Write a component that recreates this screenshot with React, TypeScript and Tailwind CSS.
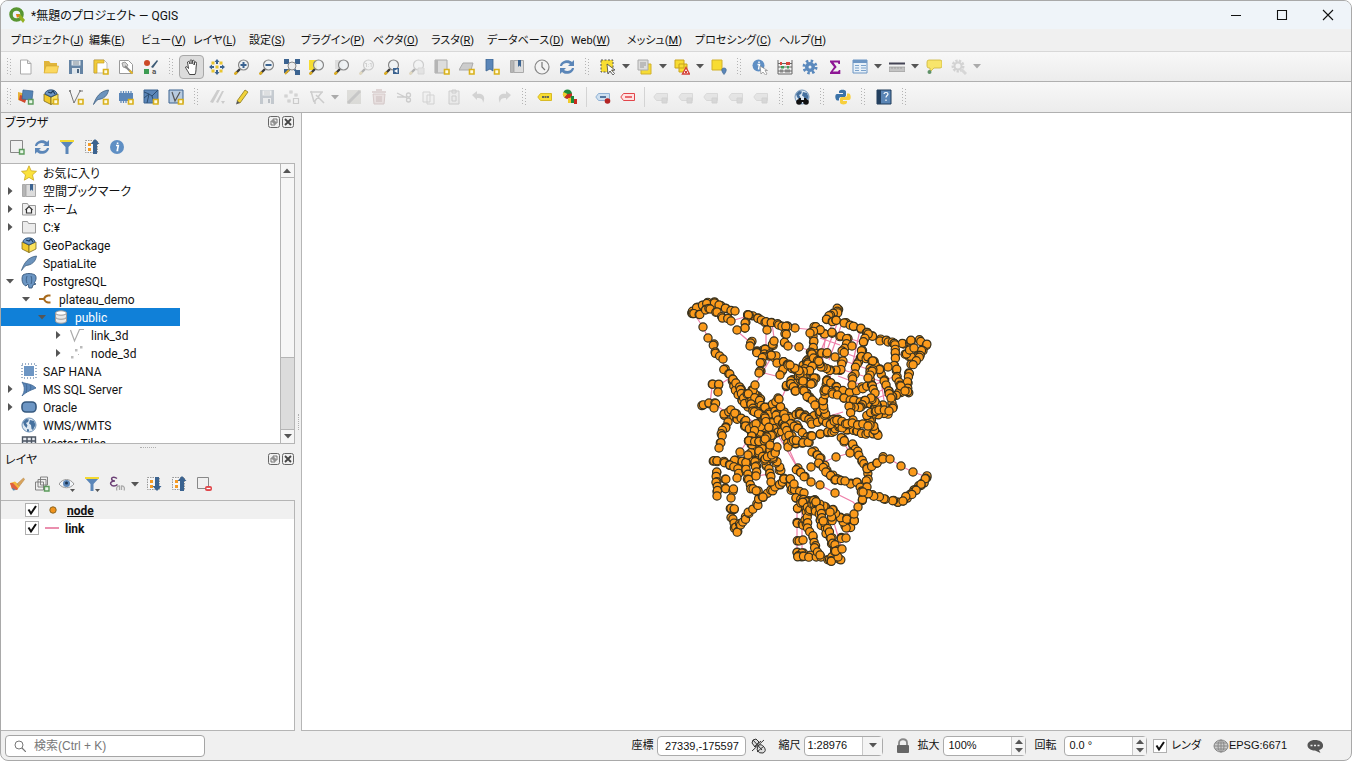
import { useState } from 'react';
import type { ReactNode } from 'react';

const BLUE = '#5b86b8';
const DARK = '#3b6390';

const plus = <path d="M10.500 10.500h4.500v4.500h-4.500z" fill="#fffbe0" stroke="#d9b11c" strokeWidth="1.600" />;
const greenPlus = <path d="M10.500 10.500h4.500v4.500h-4.500z" fill="#e9f6e9" stroke="#5b9a5b" strokeWidth="1.400" />;
const lens = (
  <g>
    <path d="M1 15l5-5" stroke="#3a3a3a" strokeWidth="2.400" />
    <path d="M.500 15.500l2.500-2.500" stroke="#e0b020" strokeWidth="2.400" />
    <circle cx="9.500" cy="6" r="5" fill="#eef2f5" fillOpacity=".85" stroke="#888" strokeWidth="1.200" />
  </g>
);
const globe = (
  <g>
    <circle cx="8" cy="8" r="7" fill="#dde8f2" stroke="#6f93b8" />
    <path d="M2 5l3-3 3 .5L7 5 5 6l1.500 2.500L5.500 11 3 8zM9 3l4 1 1.500 4-2.500 5-1.500-1-.5-4-2-1.500zM6 12l2 .5v2H6z" fill="#46719f" />
  </g>
);
const elephant = (
  <g>
    <path d="M2 2c3-2 9-2 12 0 2 2 1 6-1 8l2 1-3 1-1 3H8l-1-4-2 2C1 12 0 5 2 2z" fill="#6b95c2" stroke="#35577d" strokeWidth=".9" />
    <path d="M6 3c-1 3-1 5 0 7M10 3c1 3 1 5 0 8" fill="none" stroke="#35577d" strokeWidth=".8" />
  </g>
);
const refresh = (
  <g fill={BLUE}>
    <path d="M1 7c0-5 8-8 12-4l2-2v6H9l2-2C8 3 4 4 3 7z" />
    <path d="M15 9c0 5-8 8-12 4l-2 2V9h6l-2 2c3 2 7 1 8-2z" />
  </g>
);
const box = (
  <g>
    <path d="M1 5l7 3v7.500l-7-3.500z" fill="#f1c92b" stroke="#7d6b1c" strokeWidth=".8" />
    <path d="M15 5L8 8v7.500l7-3.500z" fill="#fbe35e" stroke="#7d6b1c" strokeWidth=".8" />
    <path d="M2 5c0-5 11-6 12 0L8 8z" fill="#6f98c6" stroke="#27486d" strokeWidth=".9" />
    <path d="M5 3l3 1 2-2 2 3" fill="none" stroke="#1e3c5c" strokeWidth="1.200" />
  </g>
);
const feather = <path d="M.500 15.500C3 8 7 2 15.500 1c-1 6-5 9-10.500 9.500-2 1.500-3 3-4.500 5z" fill="#6b93bd" stroke="#3f5f80" strokeWidth=".8" />;
const book = (
  <g>
    <path d="M1.500 1.500h3v12h-3z" fill="#b5b5b5" stroke="#aaa" />
    <path d="M5 1.500h9.500v12H5z" fill="#dcdcdc" stroke="#aaa" />
    <path d="M9 1h3v7l-1.500-1.500L9 8z" fill={DARK} />
  </g>
);
const info = (
  <g>
    <circle cx="8" cy="8" r="7" fill="#5f8fc4" />
    <path d="M7 6.500h2.300l-1 5h1M8.600 3.500v1.500" fill="none" stroke="#fff" strokeWidth="1.600" />
  </g>
);
const funnel = (
  <g>
    <path d="M1 2h14l-5.500 6v7h-3V8z" fill={BLUE} />
    <path d="M1 1h14v2H1z" fill="#f3d931" />
  </g>
);
const tree = (
  <g>
    <path d="M1.500 1.500h12v12h-12z" fill="#f6f6f6" stroke="#999" strokeDasharray="1.500 1" />
    <path d="M4 4h3v3H4zM4 9h3v3H4z" fill="#f59a23" />
  </g>
);
const tag = <path d="M3.500 4.500h11v7h-11L.8 8z" />;
const vec = (
  <g>
    <path d="M2 2l4 12L12 2h3" fill="none" stroke="#777" strokeWidth="1" />
    <path d="M1 1h2v2H1zM5 12h2v2H5zM11 1h2v2h-2z" fill="#888" />
  </g>
);

const ICONS: Record<string, ReactNode> = {
  file: <path d="M2.500 1h7L13 4.500V15H2.500zM9.500 1v3.500H13" fill="#fff" stroke="#aaa" />,
  folder: (
    <g>
      <path d="M1 2h5l1.500 2H14v10H1z" fill="#e0b53b" />
      <path d="M3 7h12.500L14 14H1z" fill="#fbd85f" stroke="#d2a42e" strokeWidth=".6" />
    </g>
  ),
  save: (
    <g>
      <path d="M1 1h14v14H1z" fill="#6584a4" />
      <path d="M3.500 1.500h9v5h-9z" fill="#dfe6ec" />
      <path d="M4 9h8v6H4z" fill="#dfe6ec" />
      <path d="M5 3h6M5 5h6" stroke="#87929b" />
      <path d="M9 10h2v4H9z" fill="#4c6681" />
    </g>
  ),
  layout: (
    <g>
      <path d="M1 1h10l3 3v10H1z" fill="#fff" stroke="#bbb" />
      <path d="M1 1h10v3H4v10H1z" fill="#f0cb3a" stroke="#c9a225" strokeWidth=".7" />
      {plus}
    </g>
  ),
  layouts: (
    <g>
      <path d="M1.500 1.500h9l4 4v9h-13z" fill="#fff" stroke="#999" />
      <path d="M4 4l3-1 3 3-2 3-3-1z" fill="#d5d5d5" stroke="#888" strokeWidth=".8" />
      <path d="M7 7l7 7" stroke="#888" strokeWidth="2" />
      <path d="M11.500 11.500l3 3" stroke="#e2b52b" strokeWidth="2" />
    </g>
  ),
  style: (
    <g>
      <circle cx="4" cy="4" r="3" fill="#cc4a28" />
      <path d="M1 10h5v5H1z" fill="#3d9c53" />
      <path d="M8 8l6-7 1 1-5 7z" fill="#3c5a75" />
      <text x="9" y="15" fontSize="8" fontWeight="bold" fill="#555">a</text>
    </g>
  ),
  hand: <path d="M5.500 15.500C4 12 2 10 1.500 8c1-1 2 0 3 1.500L3.500 3c1-1 2-.5 2.500 2V1.500c1-1 2-.5 2 .5v3l.5-3.500c1-.6 2 0 1.800 1L10 6l1-3c1-.4 1.700.3 1.500 1.500L12 9c0 2 0 4-1 6.500z" fill="#fff" stroke="#333" strokeWidth=".9" />,
  panSel: (
    <g fill={DARK}>
      <path d="M8 0l2.500 3H9v2H7V3H5.500zM8 16l2.500-3H9v-2H7v2H5.500zM0 8l3-2.500V7h2v2H3v1.500zM16 8l-3-2.500V7h-2v2h2v1.500z" />
      <path d="M2.500 2.500h3v3h-3zM10.500 2.500h3v3h-3zM2.500 10.500h3v3h-3zM10.500 10.500h3v3h-3zM6.500 6.500h3v3h-3z" fill="#e9c52f" />
    </g>
  ),
  zoomIn: <g>{lens}<path d="M9.500 3v6M6.500 6h6" stroke={DARK} strokeWidth="2" /></g>,
  zoomOut: <g>{lens}<path d="M6.500 6h6" stroke={DARK} strokeWidth="2" /></g>,
  zoomFull: (
    <g>
      <path d="M0 0h5v5H0zM11 0h5v5h-5zM11 11h5v5h-5zM0 10h4v4H0z" fill={DARK} />
      <path d="M4 4l8 8M12 4l-8 8" stroke={DARK} strokeWidth="2" />
      <circle cx="8" cy="7" r="4" fill="#eee" stroke="#888" />
      <path d="M1 15l4-4" stroke="#d7a92a" strokeWidth="2" />
    </g>
  ),
  zoomSel: <g><path d="M0 1h8v10H0z" fill="#f6dd31" />{lens}</g>,
  zoomLayer: <g><path d="M1 1h8v9H1z" fill="#ddd" />{lens}</g>,
  zoomNative: <g>{lens}<text x="5.500" y="8" fontSize="6" fill="#555">1:1</text></g>,
  zoomLast: <g>{lens}<path d="M9 9h6v6H9z" fill={DARK} /><path d="M13.500 10v4l-3.500-2z" fill="#fff" /></g>,
  zoomNext: <g>{lens}<path d="M9 9h6v6H9z" fill="#ccc" stroke="#aaa" /></g>,
  newMap: <g><path d="M1 1h12v13H1z" fill="#ddd" stroke="#aaa" /><path d="M1 1h3v13H1z" fill="#b5b5b5" />{plus}</g>,
  new3d: <g><path d="M4 4h10l-2 7H0z" fill="#ccc" stroke="#aaa" />{plus}</g>,
  bookmarkAdd: <g><path d="M2 0h7v12l-3-2-4 2z" fill={BLUE} stroke={DARK} strokeWidth=".8" />{plus}</g>,
  book,
  clock: (
    <g>
      <circle cx="8" cy="8" r="7" fill="#f3f3f3" stroke="#888" strokeWidth="1.200" />
      <path d="M8 3v5l3 3" fill="none" stroke="#777" strokeWidth="1.200" />
    </g>
  ),
  refresh,
  select: (
    <g>
      <path d="M1 1h12v12H1z" fill="#f8dd32" stroke="#555" strokeDasharray="2 1.500" />
      <path d="M7 5l1 10 2-3 3 4 1.500-1.500-3-3.500h3.500z" fill="#fff" stroke="#444" strokeWidth=".8" />
    </g>
  ),
  selectForm: (
    <g>
      <path d="M4 5h10v10H4z" fill="#f6dc37" stroke="#d2b12a" />
      <path d="M1 1h10v10H1z" fill="#ddd" stroke="#aaa" />
      <path d="M3 4h6M3 6h6M3 8h4" stroke="#999" />
    </g>
  ),
  deselect: (
    <g>
      <path d="M1 1h9v8H1zM5 5h8v8H5z" fill="#f8dc32" stroke="#c8a31f" />
      <path d="M12 8.500l3.500 6.500h-7z" fill="#fff" stroke="#d4403a" strokeWidth="1.400" />
      <path d="M11 13h2" stroke="#d4403a" strokeWidth="2" />
    </g>
  ),
  selectLoc: (
    <g>
      <path d="M1 1h10v10H1z" fill="#f8dc32" stroke="#d2b12a" />
      <path d="M13 9c3 0 3 3 0 6.500-3-3.500-3-6.500 0-6.500z" fill={BLUE} stroke={DARK} strokeWidth=".6" />
    </g>
  ),
  identify: (
    <g>
      <circle cx="6.500" cy="6.500" r="6" fill="#5f8fc4" />
      <path d="M5.500 5.500h2l-1 5M7 2.500v1.500" fill="none" stroke="#fff" strokeWidth="1.500" />
      <path d="M8 7l1 8 2-2 2.500 3 1.500-1-2-3.500h2.500z" fill="#fff" stroke="#888" strokeWidth=".7" />
    </g>
  ),
  abacus: (
    <g>
      <path d="M1 1v14M15 1v14M1 4.500h14M1 8h14M1 12h14M1 15h14" stroke="#666" strokeWidth="1" />
      <path d="M3 3h2v3H3zM9 3h4v3H9z" fill="#d8463c" />
      <path d="M4 7h3v2.500H4zM10 7h2v2.500h-2z" fill="#3f9b57" />
      <path d="M3 10.500h3v3H3zM8 10.500h5v3H8z" fill="#888" />
    </g>
  ),
  gear: (
    <g>
      <circle cx="8" cy="8" r="6" fill="none" stroke="#5a89bd" strokeWidth="3" strokeDasharray="2.400 2.300" />
      <circle cx="8" cy="8" r="5" fill="#5a89bd" />
      <circle cx="8" cy="8" r="1.500" fill="#eaf0f6" />
    </g>
  ),
  sigma: <path d="M3 1.500h10v3.500h-1.500l-.7-1.500H6.500L9.700 8l-4 4.500h5.300l1-1.500h1.300v4H3v-1.500L7 8 3 3z" fill="#8e1795" />,
  table: (
    <g>
      <path d="M1 1h14v13H1z" fill="#e7f0f8" stroke="#6d96c4" />
      <path d="M1 1h14v3H1z" fill="#6d96c4" />
      <path d="M3 6.500h4M9 6.500h5M3 9h4M9 9h5M3 11.500h4M9 11.500h5" stroke="#7ba2cb" strokeWidth="1" />
    </g>
  ),
  measure: (
    <g>
      <path d="M0 4.500h16" stroke="#445" strokeWidth="2" />
      <path d="M0 8h16v4.500H0z" fill="#c4c4c4" stroke="#999" strokeWidth=".7" />
      <path d="M3 8v2M6 8v2M9 8v2M12 8v2" stroke="#999" strokeWidth=".8" />
    </g>
  ),
  tip: (
    <g>
      <path d="M3 1h11q2 0 2 2v4q0 2-2 2H8l-4 4V9H3Q1 9 1 7V3q0-2 2-2z" fill="#f8e56b" stroke="#cbb538" strokeWidth=".8" />
      <circle cx="3.500" cy="13" r="2" fill="#5f9168" />
    </g>
  ),
  gearOff: (
    <g>
      <circle cx="7" cy="7" r="5" fill="none" stroke="#999" strokeWidth="3" strokeDasharray="2.200 1.200" />
      <circle cx="7" cy="7" r="3.500" fill="none" stroke="#999" strokeWidth="2" />
      <path d="M10 10l5 5" stroke="#aaa" strokeWidth="3" />
    </g>
  ),
  dataSource: (
    <g>
      <path d="M0 3l8 2-1 8-7-2z" fill="#e8b23a" />
      <path d="M2 6l7 2-2 6-6-3z" fill="#d2482f" />
      <path d="M5 1l10 1-1 9-10-1z" fill="#5484b5" stroke={DARK} strokeWidth=".7" />
      {greenPlus}
    </g>
  ),
  gpkgAdd: <g>{box}{plus}</g>,
  vecAdd: <g>{vec}{plus}</g>,
  featherAdd: <g>{feather}{plus}</g>,
  chipAdd: (
    <g>
      <path d="M1 4h14v8H1z" fill={BLUE} />
      <path d="M3 2v2M5.500 2v2M8 2v2M10.500 2v2M13 2v2M3 12v2M5.500 12v2M8 12v2" stroke={BLUE} strokeWidth="1.200" />
      {plus}
    </g>
  ),
  meshAdd: (
    <g>
      <path d="M1 1h14v13H1z" fill="#5b86b8" stroke={DARK} />
      <path d="M1 9l5-4 3 2 6-6M6 5l-2 9M9 7l2 7M1 3l5 2" fill="none" stroke="#2c4d70" />
      {plus}
    </g>
  ),
  virtualAdd: (
    <g>
      <path d="M1 1h14v13H1z" fill="#b8cbdf" stroke={DARK} />
      <path d="M4 3l3 9 5-9" fill="none" stroke="#555" strokeWidth="1.200" />
      {plus}
    </g>
  ),
  edits: <path d="M1 13L8 1h3L4 14zM7 13l6-11h2L9 14zM12 12h4l-2 3z" fill="#888" />,
  pencil: (
    <g>
      <path d="M3 12l8-11 3 2-8 11z" fill="#f2d339" stroke="#8c7a20" strokeWidth=".8" />
      <path d="M3 12l-1 3.500L6 14z" fill="#555" />
    </g>
  ),
  points: <path d="M1 6h2v2H1zM6 2h2v2H6zM11 5h2v2h-2zM4 11h2v2H4zM9.500 9.500h5v5h-5z" fill="none" stroke="#888" strokeWidth="1.200" />,
  vertex: <path d="M1 3h13M2 2l3 11M13 3L5 13M7 6l8 8M4 12h2v3" fill="none" stroke="#888" strokeWidth="1.500" />,
  form: <g><path d="M1 1h14v14H1z" fill="#b8b5a4" /><path d="M2 14L14 2" stroke="#777" strokeWidth="3" /></g>,
  trash: <g><path d="M2 5h12l-1 10H3z" fill="#e8bcbc" stroke="#b77" /><path d="M1 3h14M5 1h6M6 7v6M8 7v6M10 7v6" stroke="#b77" strokeWidth="1.500" /></g>,
  cut: <g fill="none" stroke="#888" strokeWidth="1.300"><path d="M1 4l10 5M1 8h10" /><circle cx="12.500" cy="6" r="2" /><circle cx="12.500" cy="11" r="2" /></g>,
  copy: <path d="M2 3h7v10H2zM6 6h7v9H6z" fill="#eee" stroke="#999" />,
  paste: <path d="M3 2h10v13H3zM6 1h4v3H6zM6 7h4v5H6z" fill="#ddd" stroke="#888" />,
  undo: <path d="M1 6l5-4v3c6-1 9 3 6 9 0-4-2-5-6-5v2z" fill="#999" />,
  redo: <path d="M15 6l-5-4v3C4 4 1 8 4 14c0-4 2-5 6-5v2z" fill="#999" />,
  label: <g fill="#f8dd32" stroke="#d8ba26">{tag}<path d="M5 8h7" stroke="#665" strokeWidth="2" strokeDasharray="2 .5" /></g>,
  diagram: (
    <g>
      <circle cx="5.500" cy="5" r="4.500" fill="#1d8b3c" />
      <path d="M5.500 5L1.500 3a4.500 4.500 0 001 5.500z" fill="#f1cb2c" />
      <path d="M5.500 5L10 4.500a4.500 4.500 0 01-7.500 4z" fill="#c92c20" />
      <path d="M6 9h3v5H6z" fill="#f1cb2c" />
      <path d="M9 7h3v7H9z" fill="#1d8b3c" />
      <path d="M12 10h3v5h-3z" fill="#c92c20" />
    </g>
  ),
  labelPin: (
    <g>
      <g fill="#cfe0f0" stroke="#8fb0d4">{tag}</g>
      <path d="M5 8h6" stroke="#5577a0" strokeWidth="2" />
      <circle cx="12.500" cy="12" r="2.800" fill="#b32424" />
    </g>
  ),
  labelRed: <g fill="#ffe3e3" stroke="#e2454a">{tag}<path d="M5 8h7" strokeWidth="1.500" /></g>,
  labelOff: (
    <g>
      <g fill="#ccc" stroke="#aaa">{tag}</g>
      <path d="M9 9h5v5H9z" fill="#aaa" stroke="#999" />
    </g>
  ),
  metaSearch: (
    <g>
      {globe}
      <circle cx="5" cy="13" r="2.800" fill="#111" />
      <circle cx="12" cy="13" r="2.800" fill="#111" />
      <path d="M5 9h2v2h3V9h2l1 4H4z" fill="#111" />
    </g>
  ),
  python: (
    <g>
      <path d="M4 8V2.500C4 0 11 0 11 2.500V6c0 1.500-1 2-2 2H6c-1.500 0-2 1-2 2v1.500H2C0 11-.5 5 2 5h6V4H4z" fill="#3b73a8" />
      <path d="M12 8v5.500c0 2.500-7 2.500-7 0V10c0-1.500 1-2 2-2h3c1.500 0 2-1 2-2V4.500h2c2 .5 2.500 6.500 0 6.500H8v1h4z" fill="#f7cf3e" />
    </g>
  ),
  help: (
    <g>
      <path d="M1 1h14v14H1z" fill="#5a85b5" stroke="#1e3a58" />
      <path d="M1 1h4v14H1z" fill="#24405f" />
      <path d="M8 5c0-2 4-2 4 0 0 1.500-2 1.500-2 3.500M10 10.500v1.500" fill="none" stroke="#fff" strokeWidth="1.200" />
    </g>
  ),
  addSel: <g><path d="M1.500 1.500h12v12h-12z" fill="none" stroke="#888" />{greenPlus}</g>,
  funnel,
  collapse: <g>{tree}<path d="M11 0l4.500 5H13v10H9V5H6.500z" fill={DARK} /></g>,
  expand: <g>{tree}<path d="M11 15l4.500-5H13V1H9v9H6.500z" fill={DARK} /></g>,
  info,
  star: <path d="M8 .8l2.200 5 5.300.5-4 3.600 1.200 5.300L8 12.400l-4.700 2.800 1.200-5.300-4-3.600 5.300-.5z" fill="#fbe23c" stroke="#c9a722" strokeWidth=".8" />,
  home: (
    <g>
      <path d="M1.500 2.500h5l1 2h7v9.500h-13z" fill="#eee" stroke="#999" />
      <path d="M4.500 9L8 5.500 11.500 9M5.500 8.500V12h5V8.500" fill="#fff" stroke="#333" strokeWidth="1.200" />
    </g>
  ),
  dir: <path d="M1.500 2.500h5l1 2h7v9.500h-13z" fill="#ececec" stroke="#999" />,
  box,
  feather,
  elephant,
  plug: <path d="M2 8h5M13.500 4.500H11Q8 5 7 8q1 3 4 3.500h2.500" fill="none" stroke="#a86a1c" strokeWidth="2" />,
  db: (
    <g>
      <path d="M2.500 4v8c0 3 11 3 11 0V4z" fill="#e9e9e9" stroke="#999" />
      <ellipse cx="8" cy="4" rx="5.500" ry="2.200" fill="#fff" stroke="#999" />
      <path d="M2.500 8c0 3 11 3 11 0" fill="none" stroke="#999" />
    </g>
  ),
  vec: <path d="M1.500 3l4 11 5-11.500H15" fill="none" stroke="#aaa" strokeWidth="1.200" />,
  dots: <path d="M2 11h2.500v2.500H2zM6 4h2.500v2.500H6zM11 1h2.500v2.500H11zM9 9h1v1H9z" fill="#bbb" />,
  hana: <g><path d="M3 3h10v10H3z" fill="#6d96c4" /><path d="M1 1h14v14H1z" fill="none" stroke={DARK} strokeDasharray="1 2" /></g>,
  mssql: <g><path d="M1 1c3 2 9 1 14 6-4 2-9 3-14 8 3-5 3-9 0-14z" fill={BLUE} stroke={DARK} strokeWidth=".8" /><path d="M5 2.500c1 3 1 6 0 9M9 4c1 2 1 3 0 5" fill="none" stroke="#3b6390" strokeWidth=".8" /></g>,
  oracle: <rect x="1" y="3" width="14" height="10" rx="4" fill="#6d96c4" stroke="#36597f" strokeWidth="1.600" />,
  globe,
  grid: <path d="M1.500 2h13v12h-13zM1.500 6h13M1.500 10h13M6 2v12M10.500 2v12" fill="#e6eaf0" stroke="#4c5663" strokeWidth="1.400" />,
  brush: (
    <g>
      <path d="M1 7l5-1.500 5 4.500-3 4-5-1z" fill="#f4b53a" />
      <path d="M1 7l3 0 5 5.500-1 1.500-5-1z" fill="#e0603f" />
      <path d="M8 8l6.500-6 1 1.500L10.500 10z" fill="#d9a35b" stroke="#b98a48" strokeWidth=".6" />
      <path d="M3 11.500l4 2.500-3 .5z" fill="#58a" />
    </g>
  ),
  group: <g><path d="M1.500 6h8v8h-8zM4 3.500h8V11H4zM6.500 1h7v8h-7z" fill="none" stroke="#777" strokeWidth=".9" />{greenPlus}</g>,
  eye: (
    <g>
      <path d="M0 8c4-6 11-6 15 0-4 5-11 5-15 0z" fill="#f2f5f8" stroke="#999" strokeWidth="1" />
      <circle cx="7.500" cy="7.500" r="3.500" fill={BLUE} />
      <circle cx="7.500" cy="7" r="1.500" fill="#1d3450" />
      <path d="M11 13h5l-2.500 3z" fill="#555" />
    </g>
  ),
  funnelMenu: <g>{funnel}<path d="M11 13h5l-2.500 3z" fill="#555" /></g>,
  epsilon: (
    <g fill="none">
      <path d="M8 2.500C5 0 1.500 1.500 3 4c.6 1 2 1 3 1-4 0-5 2-4 3.500 1 2 4.500 2 6.500 0" stroke="#6b3f75" strokeWidth="1.500" />
      <path d="M8 14.500c-1-2 0-5 2.500-4.500v4M15 14.500c1-2 0-5-2.500-4.500v4" stroke="#aaa" strokeWidth="1.300" />
    </g>
  ),
  remove: (
    <g>
      <path d="M1.500 1.500h11v11h-11z" fill="none" stroke="#888" />
      <rect x="9" y="10" width="7" height="5" rx="2" fill="#e0464a" />
      <path d="M10.500 12.500h4" stroke="#fff" strokeWidth="1.200" />
    </g>
  ),
  mouse: (
    <g fill="none" stroke="#333" strokeWidth="1">
      <path d="M2 5q0-4 4-4l3 3-4 5zM8 8q3-3 6 1t-1 6q-4 1-6-3z" fill="#ddd" />
      <path d="M2 13L14 2M3 2l9 10M4 9l7-6M7 14l7-6" />
    </g>
  ),
  lock: (
    <g>
      <path d="M4 8V5c0-5 8-5 8 0v3" fill="none" stroke="#888" strokeWidth="1.800" />
      <rect x="2" y="7" width="12" height="8" rx="1" fill="#666" />
    </g>
  ),
  crs: (
    <g fill="none" stroke="#888" strokeWidth="1">
      <ellipse cx="8" cy="8" rx="7" ry="6" fill="#ccc" />
      <ellipse cx="8" cy="8" rx="3" ry="6" />
      <path d="M1 8h14M2 5h12M2 11h12M8 2v12" />
    </g>
  ),
  bubble: (
    <g>
      <path d="M8 2c10 0 10 9 4 10l1.500 3L8 12.500C-2 12.500-2 2 8 2z" fill="#555" />
      <path d="M3.500 7.500h2M7 7.500h2M10.500 7.500h2" stroke="#eee" strokeWidth="1.600" />
    </g>
  ),
};

function Icon({ name }: { name: string }) {
  return <svg viewBox="0 0 16 16" className="size-4 shrink-0">{ICONS[name]}</svg>;
}

type Item = { icon: string; off?: boolean; menu?: boolean; on?: boolean };

// "x" suffix = disabled, "v" suffix = has a drop-down, "*" = pressed
function parse(s: string): (Item | string)[] {
  return s.split(' ').map((w) => {
    if (w === '|' || w === '/') return w;
    const [icon, flags = ''] = w.split(':');
    return { icon, off: flags.includes('x'), menu: flags.includes('v'), on: flags.includes('*') };
  });
}

const ROW1 = parse('file folder save layout layouts style | hand:* panSel zoomIn zoomOut zoomFull zoomSel zoomLayer zoomNative:x zoomLast zoomNext:x newMap new3d bookmarkAdd book clock refresh | select:v selectForm:v deselect:v selectLoc | identify abacus gear sigma table:v measure:v tip gearOff:xv');
const ROW2 = parse('dataSource gpkgAdd vecAdd featherAdd chipAdd meshAdd virtualAdd | edits:x pencil save:x points:x vertex:xv form:x trash:x cut:x copy:x paste:x undo:x redo:x | label diagram / labelPin labelRed / labelOff:x labelOff:x labelOff:x labelOff:x labelOff:x | metaSearch | python | help |');
const BROWSER_TOOLS = parse('addSel refresh funnel collapse info');
const LAYER_TOOLS = parse('brush group eye funnelMenu epsilon:v expand collapse remove');

function Caret({ off = false }: { off?: boolean }) {
  return <svg viewBox="0 0 8 5" className="h-[5px] w-2 shrink-0"><path d="M0 0h8L4 4.500z" fill={off ? '#aaa' : '#555'} /></svg>;
}

function Grip() {
  return (
    <svg viewBox="0 0 4 18" className="h-[18px] w-1">
      <path d="M.5 0v18M3.500 1v18" stroke="#b4b4b4" strokeDasharray="1 2" />
    </svg>
  );
}

function Tools({ items }: { items: (Item | string)[] }) {
  return items.map((t, i) => {
    if (t === '|') return <span key={i} className="flex w-4 shrink-0 justify-center"><Grip /></span>;
    if (typeof t === 'string') return <span key={i} className="flex w-2 shrink-0 justify-center"><span className="h-5 w-px bg-[#d4d4d4]" /></span>;
    return (
      <button key={i} aria-label={t.icon} disabled={t.off} className="flex shrink-0 items-center">
        <span className={`flex h-6 w-[25px] items-center justify-center rounded-sm border ${t.on ? 'border-[#a8a8a8] bg-[#dcdcdc]' : 'border-transparent'} ${t.off ? 'opacity-35 saturate-50' : ''}`}><Icon name={t.icon} /></span>
        {t.menu && <span className="flex w-3 justify-center"><Caret off={t.off} /></span>}
      </button>
    );
  });
}

const MENUS = [
  ['プロジェクト', 'J', 'w-[78px]'],
  ['編集', 'E', 'w-[52px]'],
  ['ビュー', 'V', 'w-[52px]'],
  ['レイヤ', 'L', 'w-[56px]'],
  ['設定', 'S', 'w-[52px]'],
  ['プラグイン', 'P', 'w-[72px]'],
  ['ベクタ', 'O', 'w-[58px]'],
  ['ラスタ', 'R', 'w-[56px]'],
  ['データベース', 'D', 'w-[84px]'],
  ['Web', 'W', 'w-[56px]'],
  ['メッシュ', 'M', 'w-[68px]'],
  ['プロセシング', 'C', 'w-[84px]'],
  ['ヘルプ', 'H', 'w-[56px]'],
];

const TREE = [
  { text: 'お気に入り', icon: 'star', level: 'pl-0', arrow: '' },
  { text: '空間ブックマーク', icon: 'book', level: 'pl-0', arrow: 'r' },
  { text: 'ホーム', icon: 'home', level: 'pl-0', arrow: 'r' },
  { text: 'C:¥', icon: 'dir', level: 'pl-0', arrow: 'r' },
  { text: 'GeoPackage', icon: 'box', level: 'pl-0', arrow: '' },
  { text: 'SpatiaLite', icon: 'feather', level: 'pl-0', arrow: '' },
  { text: 'PostgreSQL', icon: 'elephant', level: 'pl-0', arrow: 'd' },
  { text: 'plateau_demo', icon: 'plug', level: 'pl-4', arrow: 'd' },
  { text: 'public', icon: 'db', level: 'pl-8', arrow: 'd' },
  { text: 'link_3d', icon: 'vec', level: 'pl-12', arrow: 'r' },
  { text: 'node_3d', icon: 'dots', level: 'pl-12', arrow: 'r' },
  { text: 'SAP HANA', icon: 'hana', level: 'pl-0', arrow: '' },
  { text: 'MS SQL Server', icon: 'mssql', level: 'pl-0', arrow: 'r' },
  { text: 'Oracle', icon: 'oracle', level: 'pl-0', arrow: 'r' },
  { text: 'WMS/WMTS', icon: 'globe', level: 'pl-0', arrow: '' },
  { text: 'Vector Tiles', icon: 'grid', level: 'pl-0', arrow: '' },
];

// road chains in map coordinates, nodes are spread along them
const ROADS = [
  '693,312 697,307 702,305 707,303 714,303 720,305 725,308 735,311',
  '693,314 700,315 705,309 710,309 716,313 722,317 728,319 731,321',
  '748,315 757,318 765,322 771,323 778,324 788,327 795,328',
  '748,316 746,322 744,327 737,330',
  '787,327 786,335 784,343 788,346',
  '751,342 750,346',
  '758,351 766,348 773,345 774,341',
  '758,352 770,355 775,357 777,363',
  '770,354 763,357 761,363 760,371 759,373',
  '783,362 788,365 782,370 780,375',
  '788,365 795,370 798,370 807,361 815,362',
  '787,386 792,380 795,383 803,378 805,387 808,397',
  '798,370 799,376 805,373 815,377 813,383',
  '714,345 716,353 723,359',
  '724,370 730,375 733,380 735,390 742,400 748,407',
  '732,378 740,388 747,395 757,397 752,390 755,385',
  '740,390 745,403 753,400 760,407 761,417',
  '748,395 760,400 760,411 773,405 778,398',
  '750,405 755,412 761,417 775,415 783,413 790,417 800,413 805,415',
  '765,408 770,414 780,407 779,399',
  '712,383 718,385 718,392', '703,405 709,404 716,404 714,408',
  '725,415 730,411 734,415 736,420 728,422',
  '736,414 745,421 748,427 755,428 762,421 768,423 777,427',
  '725,427 722,435 720,442 719,448',
  '714,461 717,461 724,462 730,465 735,460 742,462 747,463 757,459',
  '717,473 717,482 718,491 717,496', '726,480 725,488 733,490 731,498',
  '730,508 733,510 732,518 735,528 737,531 740,525 745,518 748,513 757,505 758,498 763,497 772,490 780,485 787,480',
  '730,465 738,468 737,478', '747,463 747,470 748,480 752,488 757,492 763,497',
  '756,448 756,456 756,467 756,476', '767,455 767,465 770,473 771,482',
  '780,471 777,463 773,458 775,450 768,453 762,448 756,452 748,455',
  '748,427 752,433 748,440 752,445 755,440 762,448',
  '745,425 760,433 767,435 765,428 755,425 750,440 760,442 770,440 770,450',
  '765,420 772,424 777,432 788,432 787,438 788,447',
  '760,452 764,460 776,453 777,447', '776,415 782,423 789,428 797,425',
  '783,414 790,423 799,428 808,437 805,442 795,443 792,436',
  '784,427 793,441 802,442 808,442 812,436 820,434 827,433 833,432 840,427 848,429 857,432 867,434 877,435 875,430 873,425 868,417',
  '800,415 810,418 820,415 833,420 843,427 853,422',
  '805,417 812,423 822,420 830,424 838,420',
  '842,438 845,441 852,445 858,452 862,460 868,468 867,480 865,492 862,500 858,507',
  '853,520 851,527 845,527 840,517 832,509 825,506 815,500',
  '815,451 812,452', '817,456 821,459 824,466 832,475 840,480', '850,484 856,483 862,492 867,487',
  '819,463 826,472 836,480 845,481',
  '797,469 801,472 805,477 811,482',
  '868,468 877,463 883,458 890,459',
  '927,477 923,483 915,490 907,497 898,503 893,500 885,498 873,495 863,492',
  '925,479 920,485 911,494 903,501',
  '787,480 792,490 795,490 804,493', '783,479 790,478 794,484',
  '797,497 805,503 797,508 803,500 815,500', '797,523 802,524 805,520', '798,540 803,540',
  '798,553 803,552 803,557 798,557 810,556 821,557', '807,502 807,512 807,523 812,537 815,547 820,555',
  '804,503 810,510 812,504', '813,501 816,510 820,520 827,533 832,543 835,550 837,557',
  '817,503 824,522 831,538 838,550', '829,560 833,556 840,560 832,562 838,557', '835,551 842,549', '842,538 846,538',
  '848,519 854,521 854,514', '833,520 830,512',
  '838,309 838,312 830,315 827,320 832,321 837,321 845,322 853,326 860,329 867,333 873,337 880,340 887,341 895,344 903,344 910,343 912,340 920,341 927,345 922,350 918,355 910,356 906,353 914,348',
  '919,356 912,365 910,373 908,383 908,392 900,393 892,397 893,407 888,413 878,414 868,416 870,425',
  '895,344 895,353 895,365 888,367', '896,370 897,377 900,385 905,391',
  '815,328 825,333 833,333 840,336 847,338 843,352 842,360 840,370 830,370 822,367 815,362 807,363',
  '815,328 813,332 813,342 811,352 822,353 828,353 835,357', '819,329 810,333',
  '807,363 805,373 802,387 810,398 817,407 825,415 823,400 825,390 827,380',
  '811,355 818,362 809,370 799,372 790,365',
  '827,380 837,387 837,390 850,392 862,388 872,385',
  '825,390 832,393 843,398 855,400 865,403 875,407 883,405',
  '867,333 863,342 862,350 858,363 853,378 852,385',
  '862,356 867,358 873,362 880,370 885,380 888,390 891,398',
  '872,362 870,373 872,385 875,393', '880,370 872,370 868,378',
  '877,405 871,399 864,400 860,408 850,407 853,420', '868,416 875,411 889,411',
  '838,420 846,424 858,424 868,426', '790,383 796,392 804,390 810,385 803,381',
  '808,397 815,405',
  '754,412 765,417 768,428 772,435 764,440 770,445',
];

const SINGLES = '703,327 708,338 767,330 799,347 852,346 740,452 811,467 836,457 850,453 820,485 835,493 901,466 913,472';

const LINKS = [
  '731,321 748,316', '737,331 751,343', '766,323 766,348', '772,323 775,345', '795,328 815,330', '785,344 799,347 811,351',
  '695,315 703,327 708,338 714,345', '723,359 724,370', '712,387 710,404', '719,385 730,378', '716,405 728,414',
  '736,412 760,425', '736,415 755,428 770,440', '775,430 797,467', '788,447 798,469', '811,467 836,457 850,453 842,440', '811,482 820,485 835,493 853,502 858,507',
  '890,459 901,466 913,472 927,477', '740,452 748,440', '756,476 770,474', '797,500 797,553', '802,505 802,553', '856,507 850,527 846,538',
  '833,520 842,549', '760,372 780,377', '787,386 780,402', '833,322 819,355', '837,324 824,358', '841,326 829,360', '820,338 840,345',
  '847,338 861,342', '843,352 863,360', '842,360 873,371', '840,369 880,381', '838,376 870,388', '860,330 848,385', '850,395 893,377',
  '875,393 890,387', '877,398 891,393', '843,412 826,417', '895,355 908,354', '880,375 884,400', '829,370 832,385', '825,340 822,365',
  '755,385 771,358',
];

function pts(s: string) {
  return s.split(' ').map((p) => p.split(',').map(Number));
}

// small fixed-seed generator so the nodes stay put between renders
let seed = 7;
function rand() {
  seed = (seed * 16807) % 2147483647;
  return seed / 2147483647;
}

const NODES: number[][] = [];
for (const road of ROADS) {
  const p = pts(road);
  for (let i = 0; i < p.length - 1; i++) {
    const [x1, y1] = p[i];
    const [x2, y2] = p[i + 1];
    const n = Math.max(1, Math.round(Math.hypot(x2 - x1, y2 - y1) / 5.5));
    for (let k = 0; k < n; k++) {
      const x = x1 + ((x2 - x1) * k) / n;
      const y = y1 + ((y2 - y1) * k) / n;
      // junctions hold several nodes almost on top of each other
      const copies = k === 0 ? 2 : 1;
      for (let c = 0; c < copies; c++) NODES.push([x + (rand() - 0.5) * 2.5, y + (rand() - 0.5) * 2.5]);
    }
  }
  NODES.push(p[p.length - 1]);
}
NODES.push(...pts(SINGLES));

function MapCanvas() {
  return (
    <svg viewBox="302 113 1049 617" className="h-full w-full">
      {[...LINKS, ...ROADS].map((l, i) => <polyline key={i} points={l} fill="none" stroke="#ee7fa8" strokeWidth="1.200" />)}
      {NODES.map(([x, y], i) => <circle key={i} cx={x} cy={y} r="4.100" fill="#fb9a1b" stroke="#35301f" strokeWidth="1.200" />)}
    </svg>
  );
}

function DockTitle({ text }: { text: string }) {
  return (
    <div className="flex h-[18px] items-center gap-0.5 pl-1 pr-px">
      <h2 className="flex-1 pt-px">{text}</h2>
      <button aria-label="フロート">
        <svg viewBox="0 0 12 12" className="size-3"><rect x=".5" y=".5" width="11" height="11" rx="2" fill="none" stroke="#666" /><path d="M5 3h4v4H5zM3 5h4v4H3z" fill="#f0f0f0" stroke="#666" strokeWidth=".9" /></svg>
      </button>
      <button aria-label="閉じる">
        <svg viewBox="0 0 12 12" className="size-3"><rect x=".5" y=".5" width="11" height="11" rx="2" fill="none" stroke="#666" /><path d="M3 3l6 6M9 3l-6 6" stroke="#444" strokeWidth="1.800" /></svg>
      </button>
    </div>
  );
}

function Check({ id, checked, onChange }: { id: string; checked: boolean; onChange: () => void }) {
  return (
    <span className="relative flex size-[14px] shrink-0">
      <input id={id} type="checkbox" checked={checked} onChange={onChange} className="size-[14px] appearance-none border border-[#b0b0b0] bg-white" />
      {checked && <svg viewBox="0 0 14 14" className="pointer-events-none absolute inset-0"><path d="M3.500 6.500L6 10.500 11 3" fill="none" stroke="#111" strokeWidth="2" /></svg>}
    </span>
  );
}

function Spin({ id, value, onChange }: { id: string; value: string; onChange: (v: string) => void }) {
  return (
    <div className="flex h-5 w-[83px] rounded-sm border border-[#ababab] bg-white">
      <input id={id} value={value} onChange={(e) => onChange(e.target.value)} className="min-w-0 flex-1 px-1 outline-none" />
      <div className="flex w-[14px] flex-col items-center justify-center gap-1 border-l border-[#c8c8c8] bg-[#f4f4f4]">
        <button aria-label="増やす" className="rotate-180"><Caret /></button>
        <button aria-label="減らす"><Caret /></button>
      </div>
    </div>
  );
}

export default function App() {
  const [current, setCurrent] = useState('public');
  const [nodeOn, setNodeOn] = useState(true);
  const [linkOn, setLinkOn] = useState(true);
  const [render, setRender] = useState(true);
  const [search, setSearch] = useState('');
  const [coord, setCoord] = useState('27339,-175597');
  const [zoom, setZoom] = useState('100%');
  const [angle, setAngle] = useState('0.0 °');

  return (
    <div className="flex h-screen flex-col overflow-hidden rounded-lg border border-[#a9a9a9] bg-[#f0f0f0] font-['Roboto','Noto_Sans_CJK_JP',sans-serif] text-xs text-[#111] [font-feature-settings:'palt']">
      <header className="flex h-7 shrink-0 items-center bg-[#eff4f9] pl-2">
        <svg viewBox="0 0 16 16" className="size-4">
          <circle cx="7.500" cy="7.500" r="5.500" fill="none" stroke="#589632" strokeWidth="3.500" />
          <path d="M7 7h4l5 6-2 3z" fill="#93b023" />
          <path d="M7 7l4 1-3 3z" fill="#ee7913" />
        </svg>
        <h1 className="flex-1 pl-1.5 pt-0.5">*無題のプロジェクト — QGIS</h1>
        <div className="flex gap-[34px] pr-[17px]">
          {['M1 6.500h10', 'M1.500 1.500h9v9h-9z', 'M1 1l10 10M11 1L1 11'].map((d) => (
            <button key={d} aria-label="ウィンドウ"><svg viewBox="0 0 12 12" className="size-3"><path d={d} fill="none" stroke="#111" strokeWidth="1.100" /></svg></button>
          ))}
        </div>
      </header>

      <nav className="flex h-[22px] shrink-0 items-center pl-2.5 pt-0.5 text-[11px]">
        {MENUS.map(([text, key, width]) => (
          <button key={key} className={`${width} shrink-0 whitespace-nowrap text-left`}>{text}(<u>{key}</u>)</button>
        ))}
      </nav>

      <div className="flex h-[31px] shrink-0 items-center border-b border-[#b0b0b0] border-t border-t-[#d8d8d8] bg-linear-to-b from-[#f8f8f8] to-[#ececec]">
        <span className="flex w-3 shrink-0 justify-end pr-0.5"><Grip /></span>
        <Tools items={ROW1} />
      </div>
      <div className="flex h-[31px] shrink-0 items-center border-b border-[#b0b0b0] bg-linear-to-b from-[#f8f8f8] to-[#ececec]">
        <span className="flex w-3 shrink-0 justify-end pr-0.5"><Grip /></span>
        <Tools items={ROW2} />
      </div>

      <div className="flex min-h-0 flex-1">
        <aside className="flex w-[294px] shrink-0 flex-col">
          <DockTitle text="ブラウザ" />
          <div className="flex h-8 shrink-0 items-center pl-[3px]"><Tools items={BROWSER_TOOLS} /></div>
          <div className="flex h-[281px] shrink-0 border border-l-0 border-[#b5b5b5] bg-white">
            <ul className="flex-1 overflow-hidden">
              {TREE.map((t) => (
                <li key={t.text} className={t.level + (t.text === current ? ' w-[179px] bg-[#1080d8] text-white' : '')}>
                  <button onClick={() => setCurrent(t.text)} className="flex h-[18px] items-center whitespace-nowrap">
                    <span className="flex w-5 shrink-0 justify-center pr-0.5">
                      {t.arrow === 'd' && <Caret />}
                      {t.arrow === 'r' && <svg viewBox="0 0 5 8" className="h-2 w-[5px]"><path d="M0 0l4.500 4L0 8z" fill="#555" /></svg>}
                    </span>
                    <Icon name={t.icon} />
                    <span className="pl-1.5 pt-px">{t.text}</span>
                  </button>
                </li>
              ))}
            </ul>
            <div className="flex w-[14px] flex-col border-l border-[#b5b5b5] bg-[#dcdcdc]">
              <button aria-label="上へ" className="flex h-[14px] rotate-180 items-center justify-center border-t border-[#b5b5b5] bg-[#f6f6f6]"><Caret /></button>
              <div className="h-[180px] border-b border-[#b5b5b5] bg-[#f6f6f6]" />
              <button aria-label="下へ" className="mt-auto flex h-[14px] items-center justify-center border-t border-[#b5b5b5] bg-[#f6f6f6]"><Caret /></button>
            </div>
          </div>
          <div className="flex h-1.5 shrink-0 items-center justify-center"><span className="w-4 border-t border-dotted border-[#b0b0b0]" /></div>
          <DockTitle text="レイヤ" />
          <div className="flex h-8 shrink-0 items-center pl-[3px]"><Tools items={LAYER_TOOLS} /></div>
          <div className="flex-1 border-y border-r border-[#b5b5b5] bg-white font-bold">
            <div className="flex h-[18px] items-center bg-[#f0f0f0] pl-6">
              <Check id="node" checked={nodeOn} onChange={() => setNodeOn(!nodeOn)} />
              <svg viewBox="0 0 14 14" className="mx-[7px] size-[14px]"><circle cx="7" cy="7" r="3.200" fill="#f0931c" stroke="#8b6520" /></svg>
              <label htmlFor="node" className="pt-px underline">node</label>
            </div>
            <div className="flex h-[18px] items-center pl-6">
              <Check id="link" checked={linkOn} onChange={() => setLinkOn(!linkOn)} />
              <svg viewBox="0 0 14 14" className="mx-1.5 size-[14px]"><path d="M0 7h14" stroke="#ea8fae" strokeWidth="1.800" /></svg>
              <label htmlFor="link" className="pt-px">link</label>
            </div>
          </div>
        </aside>
        <div className="flex w-1.5 shrink-0 items-center justify-center"><span className="h-4 border-l border-dotted border-[#b0b0b0]" /></div>
        <main className="min-w-0 flex-1 border-b border-l border-[#b5b5b5] bg-white"><MapCanvas /></main>
      </div>

      <footer className="flex h-[29px] shrink-0 items-center pl-1 pr-7 font-['Liberation_Sans','Noto_Sans_CJK_JP',sans-serif] text-[11px]">
        <div className="flex h-[22px] w-[200px] items-center rounded-sm border border-[#a5a5a5] bg-white pl-2">
          <svg viewBox="0 0 12 12" className="size-3"><circle cx="5" cy="5" r="4" fill="none" stroke="#777" /><path d="M8 8l4 4" stroke="#777" strokeWidth="1.200" /></svg>
          <input aria-label="検索" value={search} onChange={(e) => setSearch(e.target.value)} placeholder="検索(Ctrl + K)" className="min-w-0 flex-1 px-2 text-xs outline-none placeholder:text-[#777]" />
        </div>
        <div className="ml-auto flex items-center gap-1">
          <label htmlFor="coord">座標</label>
          <input id="coord" value={coord} onChange={(e) => setCoord(e.target.value)} className="h-5 w-[89px] rounded-sm border border-[#ababab] bg-white px-1 text-center" />
          <button aria-label="範囲"><Icon name="mouse" /></button>
          <label htmlFor="scale" className="pl-2">縮尺</label>
          <div className="relative">
            <select id="scale" className="block h-5 w-[79px] appearance-none rounded-sm border border-[#ababab] bg-white px-0.5"><option>1:28976</option></select>
            <span className="pointer-events-none absolute inset-y-px right-px flex w-5 items-center justify-center border-l border-[#c8c8c8] bg-[#f4f4f4]"><Caret /></span>
          </div>
          <button aria-label="ロック" className="pl-2"><Icon name="lock" /></button>
          <label htmlFor="zoom" className="pl-0.5">拡大</label>
          <Spin id="zoom" value={zoom} onChange={setZoom} />
          <label htmlFor="angle" className="px-1">回転</label>
          <Spin id="angle" value={angle} onChange={setAngle} />
          <span className="pl-0.5"><Check id="render" checked={render} onChange={() => setRender(!render)} /></span>
          <label htmlFor="render">レンダ</label>
          <button className="flex items-center pl-2"><Icon name="crs" />EPSG:6671</button>
          <button aria-label="メッセージ" className="pl-4"><Icon name="bubble" /></button>
        </div>
      </footer>
    </div>
  );
}
